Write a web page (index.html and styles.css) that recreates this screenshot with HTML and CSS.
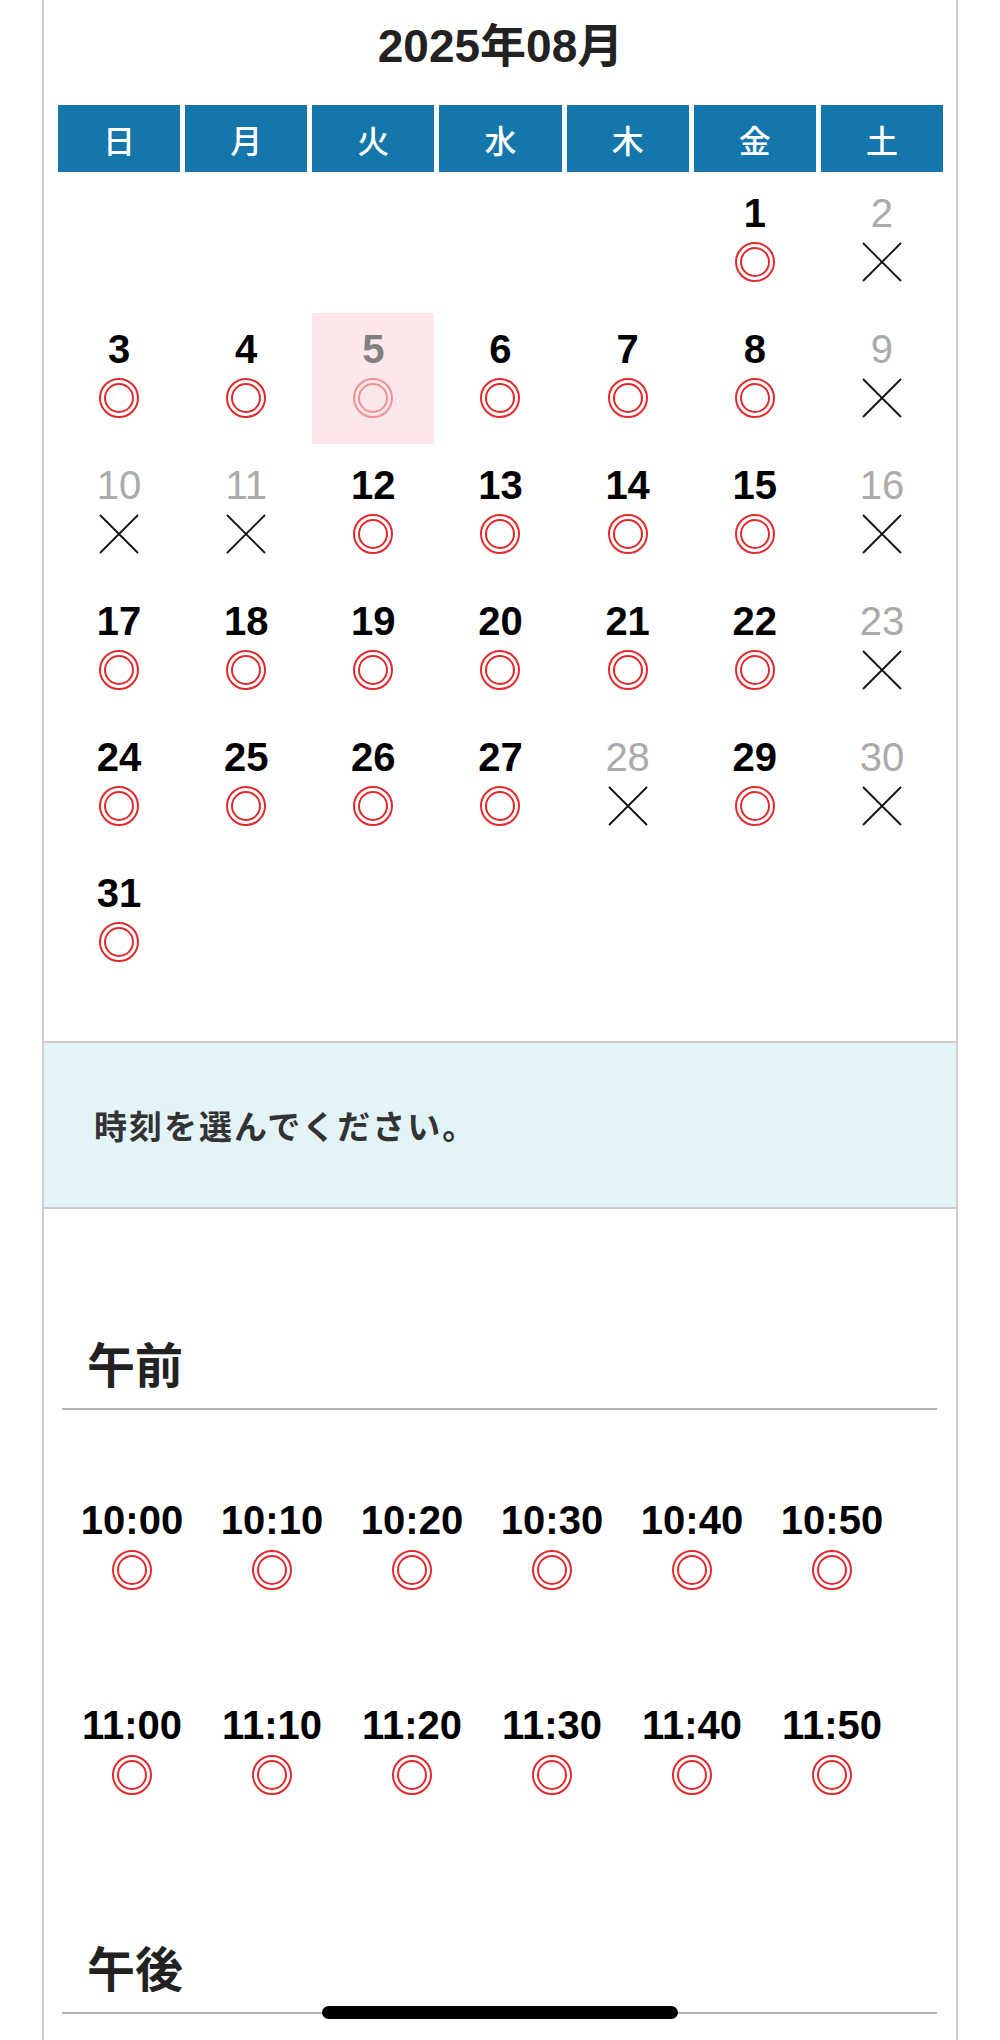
FILE: index.html
```html
<!DOCTYPE html>
<html lang="ja">
  <head>
    <meta charset="UTF-8" />
    <meta name="viewport" content="width=device-width, initial-scale=1.0" />
    <title>予約カレンダー</title>
    <link rel="stylesheet" href="styles.css">
  </head>
  <body>
    <div class="page">
      <section class="calendar">
        <h2 class="month">2025年08月</h2>
        <div class="cal-grid">
          <div class="wday">日</div>
          <div class="wday">月</div>
          <div class="wday">火</div>
          <div class="wday">水</div>
          <div class="wday">木</div>
          <div class="wday">金</div>
          <div class="wday">土</div>

          <div class="day"></div>
          <div class="day"></div>
          <div class="day"></div>
          <div class="day"></div>
          <div class="day"></div>
          <div class="day"><span class="num">1</span><span class="mark-ok"></span></div>
          <div class="day closed"><span class="num">2</span><svg class="mark-ng" viewBox="0 0 40 40"><path d="M1 1L39 39M39 1L1 39" /></svg></div>

          <div class="day"><span class="num">3</span><span class="mark-ok"></span></div>
          <div class="day"><span class="num">4</span><span class="mark-ok"></span></div>
          <div class="day selected"><span class="num">5</span><span class="mark-ok"></span></div>
          <div class="day"><span class="num">6</span><span class="mark-ok"></span></div>
          <div class="day"><span class="num">7</span><span class="mark-ok"></span></div>
          <div class="day"><span class="num">8</span><span class="mark-ok"></span></div>
          <div class="day closed"><span class="num">9</span><svg class="mark-ng" viewBox="0 0 40 40"><path d="M1 1L39 39M39 1L1 39" /></svg></div>

          <div class="day closed"><span class="num">10</span><svg class="mark-ng" viewBox="0 0 40 40"><path d="M1 1L39 39M39 1L1 39" /></svg></div>
          <div class="day closed"><span class="num">11</span><svg class="mark-ng" viewBox="0 0 40 40"><path d="M1 1L39 39M39 1L1 39" /></svg></div>
          <div class="day"><span class="num">12</span><span class="mark-ok"></span></div>
          <div class="day"><span class="num">13</span><span class="mark-ok"></span></div>
          <div class="day"><span class="num">14</span><span class="mark-ok"></span></div>
          <div class="day"><span class="num">15</span><span class="mark-ok"></span></div>
          <div class="day closed"><span class="num">16</span><svg class="mark-ng" viewBox="0 0 40 40"><path d="M1 1L39 39M39 1L1 39" /></svg></div>

          <div class="day"><span class="num">17</span><span class="mark-ok"></span></div>
          <div class="day"><span class="num">18</span><span class="mark-ok"></span></div>
          <div class="day"><span class="num">19</span><span class="mark-ok"></span></div>
          <div class="day"><span class="num">20</span><span class="mark-ok"></span></div>
          <div class="day"><span class="num">21</span><span class="mark-ok"></span></div>
          <div class="day"><span class="num">22</span><span class="mark-ok"></span></div>
          <div class="day closed"><span class="num">23</span><svg class="mark-ng" viewBox="0 0 40 40"><path d="M1 1L39 39M39 1L1 39" /></svg></div>

          <div class="day"><span class="num">24</span><span class="mark-ok"></span></div>
          <div class="day"><span class="num">25</span><span class="mark-ok"></span></div>
          <div class="day"><span class="num">26</span><span class="mark-ok"></span></div>
          <div class="day"><span class="num">27</span><span class="mark-ok"></span></div>
          <div class="day closed"><span class="num">28</span><svg class="mark-ng" viewBox="0 0 40 40"><path d="M1 1L39 39M39 1L1 39" /></svg></div>
          <div class="day"><span class="num">29</span><span class="mark-ok"></span></div>
          <div class="day closed"><span class="num">30</span><svg class="mark-ng" viewBox="0 0 40 40"><path d="M1 1L39 39M39 1L1 39" /></svg></div>

          <div class="day"><span class="num">31</span><span class="mark-ok"></span></div>
        </div>
      </section>

      <div class="notice">時刻を選んでください。</div>

      <section class="slots">
        <h3 class="period">午前</h3>
        <div class="slot-grid">
          <div class="slot"><span class="slot-time">10:00</span><span class="mark-ok"></span></div>
          <div class="slot"><span class="slot-time">10:10</span><span class="mark-ok"></span></div>
          <div class="slot"><span class="slot-time">10:20</span><span class="mark-ok"></span></div>
          <div class="slot"><span class="slot-time">10:30</span><span class="mark-ok"></span></div>
          <div class="slot"><span class="slot-time">10:40</span><span class="mark-ok"></span></div>
          <div class="slot"><span class="slot-time">10:50</span><span class="mark-ok"></span></div>
          <div class="slot"><span class="slot-time">11:00</span><span class="mark-ok"></span></div>
          <div class="slot"><span class="slot-time">11:10</span><span class="mark-ok"></span></div>
          <div class="slot"><span class="slot-time">11:20</span><span class="mark-ok"></span></div>
          <div class="slot"><span class="slot-time">11:30</span><span class="mark-ok"></span></div>
          <div class="slot"><span class="slot-time">11:40</span><span class="mark-ok"></span></div>
          <div class="slot"><span class="slot-time">11:50</span><span class="mark-ok"></span></div>
        </div>

        <h3 class="period">午後</h3>
      </section>
    </div>

    <div class="home-bar"></div>
  </body>
</html>
```

FILE: styles.css
```css
body {
  margin: 0;
  background-color: #fff;
  font-family: "Liberation Sans", "Noto Sans CJK JP", sans-serif;
}
.page {
  width: 912px;
  min-height: 100vh;
  margin: 0 auto;
  border-left: 2px solid #cfcfcf;
  border-right: 2px solid #cfcfcf;
}

/* calendar */
.calendar {
  padding: 19px 13px 53px 14px;
}
.month {
  margin: 0 0 32px 0;
  font-size: 46px;
  line-height: 54px;
  font-weight: bold;
  text-align: center;
  color: #222;
}
.cal-grid {
  display: grid;
  grid-template-columns: repeat(7, 1fr);
  grid-template-rows: 67px;
  grid-auto-rows: 131px;
  gap: 5px;
}
.wday {
  display: flex;
  align-items: center;
  justify-content: center;
  background-color: #1476aa;
  color: #fff;
  font-family: "Noto Sans CJK JP", sans-serif;
  font-size: 32px;
  font-weight: 500;
}
.day {
  display: flex;
  flex-direction: column;
  align-items: center;
  padding-top: 16px;
}
.num {
  font-size: 40px;
  line-height: 40px;
  font-weight: bold;
  color: #000;
}
.day .mark-ok,
.day .mark-ng {
  margin-top: 9px;
}
.day.closed .num {
  font-weight: normal;
  color: #aaa;
}
.day.selected {
  background-color: #fde7ea;
}
.day.selected .num {
  color: #808080;
}
.day.selected .mark-ok {
  opacity: 0.45;
}

/* marks */
.mark-ok {
  display: flex;
  align-items: center;
  justify-content: center;
  width: 40px;
  height: 40px;
  box-sizing: border-box;
  border: 2px solid #e02a2e;
  border-radius: 50%;
}
.mark-ok::after {
  content: "";
  width: 26px;
  height: 26px;
  border: 2px solid #e02a2e;
  border-radius: 50%;
}
.mark-ng {
  display: block;
  width: 40px;
  height: 40px;
  fill: none;
  stroke: #111;
  stroke-width: 1.8;
}

/* notice */
.notice {
  display: flex;
  align-items: center;
  height: 164px;
  padding-left: 50px;
  border-top: 2px solid #cccccc;
  border-bottom: 2px solid #cccccc;
  background-color: #e2f4f7;
  color: #333;
  font-family: "Noto Sans CJK JP", sans-serif;
  font-size: 33px;
  font-weight: bold;
  letter-spacing: 2px;
}

/* time slots */
.slots {
  padding: 0 19px 0 18px;
}
.period {
  margin: 124px 0 0 0;
  padding: 0 0 17px 25px;
  border-bottom: 2px solid #b3b3b3;
  color: #222;
  font-family: "Noto Sans CJK JP", sans-serif;
  font-size: 48px;
  line-height: 58px;
  font-weight: bold;
}
.slot-grid {
  display: flex;
  flex-wrap: wrap;
  row-gap: 115px;
  padding: 90px 0 18px 0;
}
.slot {
  width: 16%;
  display: flex;
  flex-direction: column;
  align-items: center;
}
.slot-time {
  font-size: 40px;
  line-height: 40px;
  font-weight: bold;
  color: #000;
}
.slot .mark-ok {
  margin-top: 10px;
}

.home-bar {
  position: fixed;
  left: 50%;
  bottom: 21px;
  width: 356px;
  height: 13px;
  margin-left: -178px;
  border-radius: 7px;
  background-color: #000;
}
```
